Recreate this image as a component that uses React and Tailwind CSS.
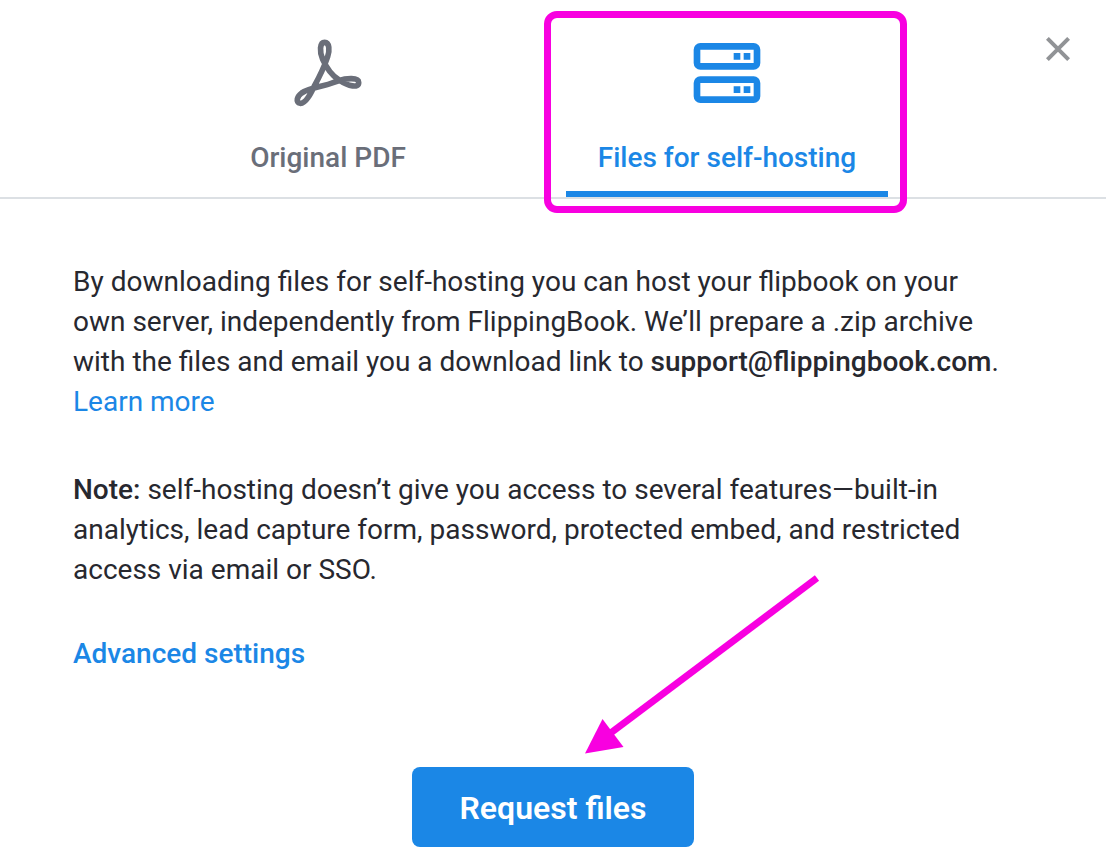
function PdfIcon() {
  return (
    <svg
      viewBox="24 24 240 240"
      className="size-20"
      fill="none"
      stroke="currentColor"
      strokeWidth="17"
      strokeLinejoin="round"
      aria-hidden="true"
    >
      <path d="M134 52C149 52 149 78 143 95C134 122 117 158 102 185C92 206 77 236 61 235C45 232 52 213 65 204C82 193 108 187 134 181C150 177 160 172 174 168C200 159 235 157 236 172C237 190 206 185 177 165C160 154 140 130 128 103C118 80 119 52 134 52Z" />
    </svg>
  );
}

function ServerIcon() {
  return (
    <svg viewBox="0 0 24 24" className="size-20" fill="currentColor" fillRule="evenodd" aria-hidden="true">
      <path d="M4 3h16a2 2 0 0 1 2 2v4a2 2 0 0 1-2 2H4a2 2 0 0 1-2-2V5a2 2 0 0 1 2-2ZM4 5v4h16V5ZM14 6h2v2h-2ZM17 6h2v2h-2Z" />
      <path d="M4 13h16a2 2 0 0 1 2 2v4a2 2 0 0 1-2 2H4a2 2 0 0 1-2-2v-4a2 2 0 0 1 2-2ZM4 15v4h16v-4ZM14 16h2v2h-2ZM17 16h2v2h-2Z" />
    </svg>
  );
}

function Tab({ icon, label, active, children }) {
  return (
    <button
      type="button"
      role="tab"
      aria-selected={active}
      className={
        active
          ? "relative flex w-[322px] flex-col items-center border-b-6 border-[#1b87e6] pt-[33px] pb-[13px] text-[#1b87e6]"
          : "relative flex w-[322px] flex-col items-center border-b-6 border-transparent pt-[33px] pb-[13px] text-[#6a6e79]"
      }
    >
      {icon}
      <span className="mt-[25px] text-[28px] leading-10 font-medium">{label}</span>
      {children}
    </button>
  );
}

export default function App() {
  return (
    <div className="relative min-h-screen bg-white font-['Roboto',sans-serif] text-[#27282f]">
      {/* TABS */}
      <header className="border-b-2 border-[#dce0e4]">
        <div role="tablist" className="flex justify-center gap-[77px] pr-[51px]">
          <Tab icon={<PdfIcon />} label="Original PDF" active={false} />
          <Tab icon={<ServerIcon />} label="Files for self-hosting" active={true}>
            {/* highlight frame */}
            <span className="pointer-events-none absolute top-[11px] -right-[19px] -bottom-[22px] -left-[22px] rounded-[13px] border-7 border-[#f800e0]"></span>
          </Tab>
        </div>
      </header>

      <button type="button" aria-label="Close" className="absolute top-[37px] right-9 text-[#919396]">
        <svg viewBox="0 0 24 24" className="size-6" fill="none" stroke="currentColor" strokeWidth="4">
          <path d="M1.4 1.4l21.2 21.2M22.6 1.4L1.4 22.6" />
        </svg>
      </button>

      {/* CONTENT */}
      <main className="px-[73px] pt-[63px] pb-5 text-[28px] leading-10">
        <p>
          By downloading files for self-hosting you can host your flipbook on your
          <br />
          own server, independently from FlippingBook. We’ll prepare a .zip archive
          <br />
          with the files and email you a download link to{" "}
          <strong className="font-medium">support@flippingbook.com</strong>.
          <br />
          <a href="#learn-more" className="text-[#1b87e6]">Learn more</a>
        </p>

        <p className="mt-12">
          <strong className="font-medium">Note:</strong> self-hosting doesn’t give you access to several features—built-in
          <br />
          analytics, lead capture form, password, protected embed, and restricted
          <br />
          access via email or SSO.
        </p>

        <button type="button" className="mt-11 block font-medium text-[#1b87e6]">
          Advanced settings
        </button>

        <div className="mt-[93px] flex justify-center">
          <div className="relative">
            <button
              type="button"
              className="block h-20 w-[282px] rounded-lg bg-[#1b87e6] pt-px text-[32px] font-semibold text-white"
            >
              Request files
            </button>
            {/* arrow pointing at the button */}
            <svg
              viewBox="0 0 236 180"
              className="pointer-events-none absolute bottom-[93px] left-[172px] h-[180px] w-[236px]"
              aria-hidden="true"
            >
              <path d="M233 4L24 161" stroke="#f800e0" strokeWidth="7" />
              <path d="M1 179.500L18.500 145L39.500 173Z" fill="#f800e0" />
            </svg>
          </div>
        </div>
      </main>
    </div>
  );
}
